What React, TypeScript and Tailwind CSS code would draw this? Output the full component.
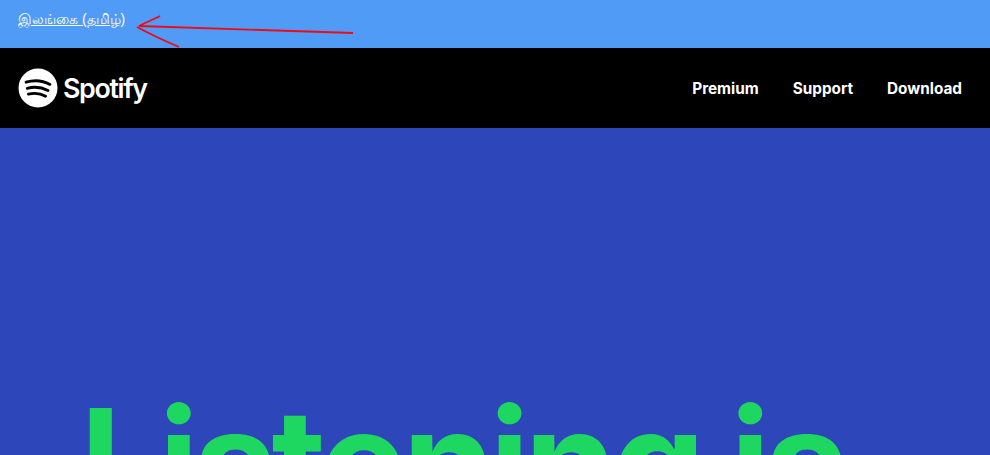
export default function App() {
  return (
    <div className="relative h-[455px] w-[990px] overflow-hidden bg-[#2d46b9] font-['Inter',sans-serif]">
      {/* Language bar */}
      <div className="flex h-12 items-center bg-[#509bf5] pb-[9px] pl-[18px]">
        <a href="#" className="font-['Liberation_Sans','Noto_Sans',sans-serif] text-[14px] text-white underline">
          இலங்கை (தமிழ்)
        </a>
      </div>

      {/* Red hand-drawn arrow */}
      <svg className="absolute left-0 top-0" width="370" height="50" viewBox="0 0 370 50" fill="none">
        <path
          d="M353 33 C300 31 230 29 139 26 C145 23 152 20 160 16 M137 27 C150 34 165 41 179 47"
          stroke="#f00a14"
          strokeWidth="1.8"
        />
      </svg>

      {/* Nav */}
      <nav className="flex h-20 items-center justify-between bg-black pl-[18px] pr-7">
        <div className="flex items-center gap-[5px]">
          <svg width="40" height="40" viewBox="0 0 40 40">
            <circle cx="20" cy="20" r="19.5" fill="#fff" />
            <path
              d="M8 14.2 C15.5 12 25 12.6 32 16.4 M9.2 20.4 C15.5 18.6 23.5 19.2 30 22.6 M10.4 26.2 C15.5 25 22.5 25.4 27.6 28.2"
              fill="none"
              stroke="#000"
              strokeWidth="2.8"
              strokeLinecap="round"
            />
          </svg>
          <span className="text-[26.8px] font-semibold leading-none tracking-[-0.05em] text-white">Spotify</span>
        </div>
        <div className="flex items-center gap-[34px] pt-[2px] text-[15.3px] font-bold text-white">
          <a href="#">Premium</a>
          <a href="#">Support</a>
          <a href="#">Download</a>
        </div>
      </nav>

      {/* Hero */}
      <div className="pl-[80px] pt-[261px]">
        <h1 className="whitespace-nowrap text-[148px] font-bold leading-none tracking-[-0.034em] text-[#1ed760]">
          Listening is
        </h1>
      </div>
    </div>
  );
}
